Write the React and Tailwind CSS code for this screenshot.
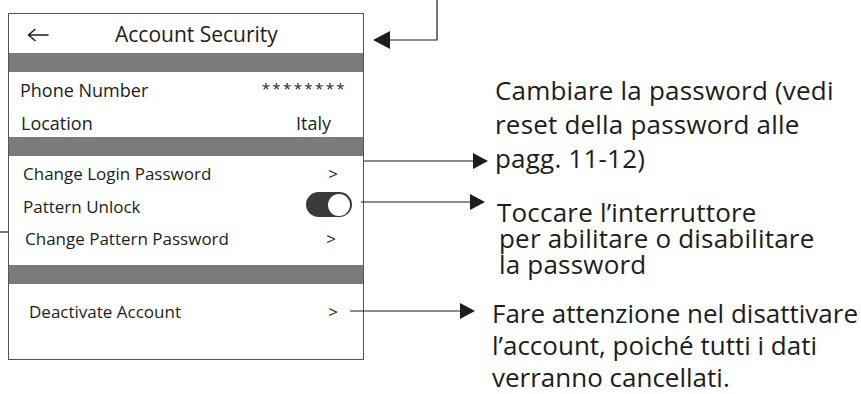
import React from 'react';

const font = { fontFamily: '"Open Sans", "Noto Sans", sans-serif' };

function BackArrow() {
  return (
    <svg width="22" height="14" viewBox="0 0 22 14" fill="none">
      <path d="M21.5 7H1.5M8.5 1L1.5 7l7 6" stroke="#1d1d1b" strokeWidth="1.5" />
    </svg>
  );
}

function Toggle() {
  return (
    <div className="flex h-[25px] w-[46px] items-center justify-end rounded-full bg-[#3a3a3a] px-[2px]">
      <div className="h-[22px] w-[22px] rounded-full bg-white" />
    </div>
  );
}

function Bar() {
  return <div className="h-[19px] w-full bg-[#7b7b7b]" />;
}

function Row({ label, right, className }) {
  return (
    <div className={`flex items-start justify-between leading-[20px] ${className}`}>
      <span>{label}</span>
      {right}
    </div>
  );
}

function Note({ lines, className }) {
  return (
    <div className={className}>
      {lines.map((line, i) => (
        <div key={i} className={line.indent ? 'ml-[2px]' : ''}>
          {line.text}
        </div>
      ))}
    </div>
  );
}

function Connectors() {
  return (
    <svg className="pointer-events-none absolute inset-0" width="861" height="394">
      <g stroke="#1d1d1b" strokeWidth="1.2" fill="none">
        <path d="M437 0V40H388" />
        <path d="M364 161H474" />
        <path d="M361 202H471" />
        <path d="M350 311H461" />
        <path d="M0 232H8" />
      </g>
      <g fill="#1d1d1b">
        <polygon points="373,40 390,31 390,49" />
        <polygon points="473,153 488,161 473,169" />
        <polygon points="470,194 485,202 470,210" />
        <polygon points="460,303 475,311 460,319" />
      </g>
    </svg>
  );
}

export default function App() {
  return (
    <div className="relative h-[394px] w-[861px] overflow-hidden bg-white text-[#1d1d1b]" style={font}>
      <div className="flex items-start">
        <div className="ml-[8px] mt-[13px] flex h-[347px] w-[356px] shrink-0 flex-col border-[1.5px] border-[#555]">
          <div className="flex h-[39px] items-start pt-[10px]">
            <div className="ml-[18px] mt-[4px]">
              <BackArrow />
            </div>
            <span className="ml-[66px] text-[21px] leading-[20px]">Account Security</span>
          </div>
          <Bar />
          <Row
            className="h-[33px] pl-[11px] pr-[16px] pt-[8px] text-[18px]"
            label="Phone Number"
            right={<span className="-mt-[2px] text-[15px] tracking-[2.4px]">********</span>}
          />
          <Row
            className="h-[32px] pl-[12px] pr-[32px] pt-[8px] text-[18px]"
            label="Location"
            right={<span>Italy</span>}
          />
          <Bar />
          <Row
            className="h-[34px] pl-[14px] pr-[25px] pt-[8px] text-[17px]"
            label="Change Login Password"
            right={<span>&gt;</span>}
          />
          <Row
            className="h-[33px] pl-[14px] pr-[11px] pt-[7px] text-[17px]"
            label="Pattern Unlock"
            right={
              <div className="-mt-[5px]">
                <Toggle />
              </div>
            }
          />
          <Row
            className="h-[42px] pl-[16px] pr-[27px] pt-[6px] text-[17px]"
            label="Change Pattern Password"
            right={<span>&gt;</span>}
          />
          <Bar />
          <Row
            className="flex-1 pl-[20px] pr-[25px] pt-[18px] text-[17px]"
            label="Deactivate Account"
            right={<span>&gt;</span>}
          />
        </div>

        <div className="flex flex-col whitespace-nowrap pl-[130px] text-[26px]">
          <Note
            className="ml-[1px] mt-[73px] leading-[34px] tracking-[0.2px]"
            lines={[
              { text: 'Cambiare la password (vedi' },
              { text: 'reset della password alle' },
              { text: 'pagg. 11-12)' },
            ]}
          />
          <Note
            className="ml-[3px] mt-[24px] leading-[26px] tracking-[0.2px]"
            lines={[
              { text: 'Toccare l’interruttore' },
              { text: 'per abilitare o disabilitare', indent: true },
              { text: 'la password', indent: true },
            ]}
          />
          <Note
            className="-ml-[2px] mt-[20px] leading-[32px]"
            lines={[
              { text: 'Fare attenzione nel disattivare' },
              { text: 'l’account, poiché tutti i dati' },
              { text: 'verranno cancellati.' },
            ]}
          />
        </div>
      </div>
      <Connectors />
    </div>
  );
}
